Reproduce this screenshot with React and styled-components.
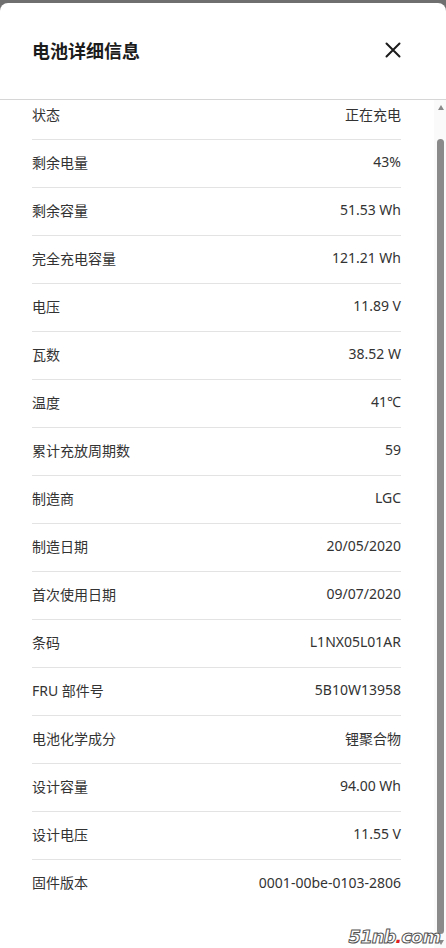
import React from 'react';
import styled, { createGlobalStyle } from 'styled-components';

const rows = [
  ['状态', '正在充电'],
  ['剩余电量', '43%'],
  ['剩余容量', '51.53 Wh'],
  ['完全充电容量', '121.21 Wh'],
  ['电压', '11.89 V'],
  ['瓦数', '38.52 W'],
  ['温度', '41℃'],
  ['累计充放周期数', '59'],
  ['制造商', 'LGC'],
  ['制造日期', '20/05/2020'],
  ['首次使用日期', '09/07/2020'],
  ['条码', 'L1NX05L01AR'],
  ['FRU 部件号', '5B10W13958'],
  ['电池化学成分', '锂聚合物'],
  ['设计容量', '94.00 Wh'],
  ['设计电压', '11.55 V'],
  ['固件版本', '0001-00be-0103-2806'],
];

const GlobalStyle = createGlobalStyle`
  html, body {
    margin: 0;
    padding: 0;
    background: #6f6f6f;
    overflow: hidden;
  }
  * {
    box-sizing: border-box;
  }
`;

const Dialog = styled.div`
  position: relative;
  margin-top: 3px;
  height: 945px;
  background: #fff;
  border-radius: 8px 8px 0 0;
  display: flex;
  flex-direction: column;
  font-family: 'Noto Sans', 'Noto Sans CJK SC', sans-serif;
  color: #333;
  overflow: hidden;
`;

const Header = styled.div`
  height: 97px;
  flex-shrink: 0;
  display: flex;
  align-items: center;
  justify-content: space-between;
  padding: 0 44px 2px 32px;
  border-bottom: 1px solid #d6d6d6;
`;

const Title = styled.h1`
  margin: 0;
  font-size: 18px;
  font-weight: 700;
  color: #1c1c1c;
`;

const CloseButton = styled.button`
  border: 0;
  background: none;
  padding: 0;
  width: 18px;
  height: 18px;
  display: flex;
  align-items: center;
  justify-content: center;
  cursor: pointer;
`;

const Body = styled.div`
  flex: 1;
  display: flex;
  min-height: 0;
`;

const Viewport = styled.div`
  flex: 1;
  overflow: hidden;
`;

const List = styled.div`
  margin-top: -8px;
  padding: 0 33px 40px 32px;
`;

const Row = styled.div`
  height: 48px;
  display: flex;
  align-items: center;
  justify-content: space-between;
  padding-bottom: 4px;
  font-size: 14px;
  border-bottom: ${({ $last }) => ($last ? 'none' : '1px solid #e3e3e3')};
`;

const Label = styled.span`
  color: #333;
`;

const Value = styled.span`
  color: #333;
`;

const Rail = styled.div`
  width: 12px;
  flex-shrink: 0;
  background: #fafafa;
  display: flex;
  flex-direction: column;
  align-items: center;
  padding: 5px 0 3px 1px;
`;

const Arrow = styled.span`
  width: 0;
  height: 0;
  border-left: 3.5px solid transparent;
  border-right: 3.5px solid transparent;
  ${({ $down }) =>
    $down ? 'border-top: 5px solid #8a8a8a;' : 'border-bottom: 5px solid #8a8a8a;'}
`;

const Thumb = styled.div`
  flex: 1;
  width: 7px;
  margin: 29px 0 6px;
  border-radius: 4px;
  background: #8a8a8a;
`;

const Watermark = styled.div`
  position: absolute;
  right: 6px;
  bottom: 1px;
  font-family: 'DejaVu Sans', sans-serif;
  font-size: 18px;
  font-weight: 700;
  font-style: italic;
  color: #fff;
  -webkit-text-stroke: 1px #555;
  letter-spacing: -1px;

  b {
    color: #e02020;
    -webkit-text-stroke: 0;
  }
`;

export default function App() {
  return (
    <>
      <GlobalStyle />
      <Dialog>
        <Header>
          <Title>电池详细信息</Title>
          <CloseButton aria-label="关闭">
            <svg width="16" height="16" viewBox="0 0 16 16">
              <path d="M1.5 1.5 L14.5 14.5 M14.5 1.5 L1.5 14.5" stroke="#1c1c1c" strokeWidth="2" strokeLinecap="round" />
            </svg>
          </CloseButton>
        </Header>
        <Body>
          <Viewport>
            <List>
              {rows.map(([k, v], i) => (
                <Row key={k} $last={i === rows.length - 1}>
                  <Label>{k}</Label>
                  <Value>{v}</Value>
                </Row>
              ))}
            </List>
          </Viewport>
          <Rail>
            <Arrow />
            <Thumb />
            <Arrow $down />
          </Rail>
        </Body>
        <Watermark>
          51nb<b>.</b>com
        </Watermark>
      </Dialog>
    </>
  );
}
